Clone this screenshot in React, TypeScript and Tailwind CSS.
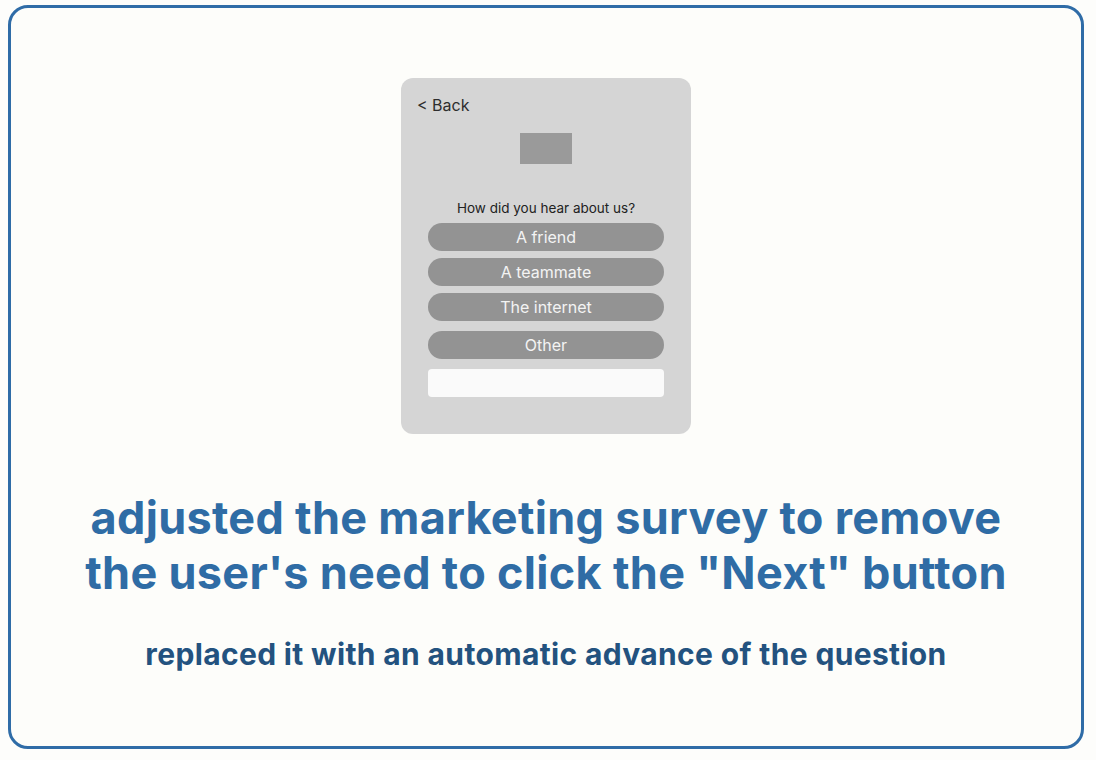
export default function App() {
  const options = ["A friend", "A teammate", "The internet"];
  return (
    <div className="w-[1096px] h-[760px] bg-[#fdfdfb] pl-[8px] pr-[12px] pt-[5px] pb-[11px] font-['Inter',sans-serif]">
      <div className="h-full w-full rounded-[20px] border-[3px] border-[#2f6ca7] bg-[#fdfdfa] flex flex-col items-center">
        {/* survey mockup */}
        <div className="mt-[70px] w-[290px] h-[356px] rounded-[12px] bg-[#d5d5d5] flex flex-col px-[16px] pt-[17px]">
          <div className="text-[16px] leading-[20px] text-[#2e2e2e]">&lt; Back</div>
          <div className="self-center mt-[18px] w-[52px] h-[31px] bg-[#9a9a9a]" />
          <div className="mt-[36px] text-center text-[13.5px] leading-[16px] text-[#222]">How did you hear about us?</div>
          <div className="mt-[7px] mx-[11px] flex flex-col">
            {options.map((o) => (
              <div key={o} className="h-[28px] mb-[7px] rounded-full bg-[#939393] text-[#f3f3f3] text-[16px] flex items-center justify-center">
                {o}
              </div>
            ))}
            <div className="h-[28px] mt-[3px] rounded-full bg-[#939393] text-[#f3f3f3] text-[16px] flex items-center justify-center">
              Other
            </div>
            <div className="h-[28px] mt-[10px] rounded-[4px] bg-[#fafafa]" />
          </div>
        </div>
        <h1 className="mt-[56px] text-center text-[45px] leading-[55px] font-bold text-[#2f6ca5] tracking-[0.3px]">
          adjusted the marketing survey to remove
          <br />
          the user's need to click the "Next" button
        </h1>
        <p className="mt-[36px] text-center text-[30px] leading-[36px] font-bold text-[#23527f] tracking-[0.35px]">
          replaced it with an automatic advance of the question
        </p>
      </div>
    </div>
  );
}
